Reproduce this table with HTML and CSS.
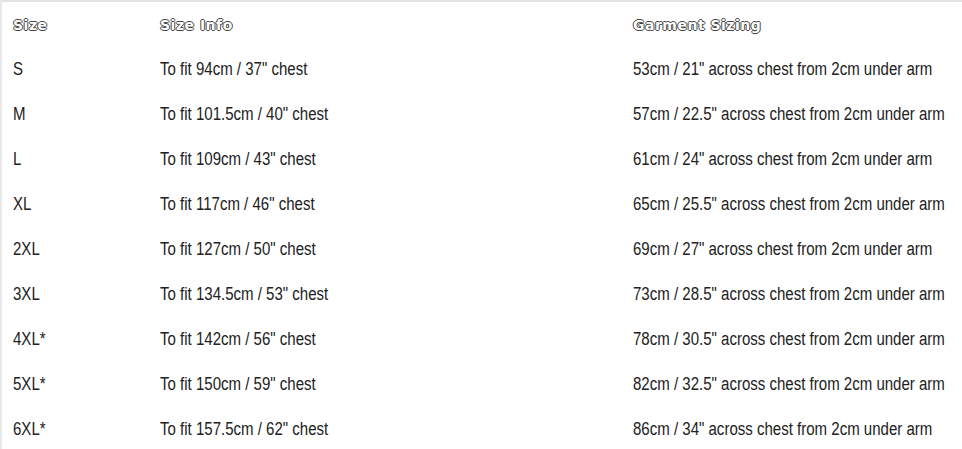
FILE: index.html
```html
<!DOCTYPE html>
<html>
<head>
<meta charset="utf-8">
<link rel="stylesheet" href="styles.css">
</head>
<body>
<div class="chart">
  <div class="row head">
    <div class="c1">Size</div><div class="c2">Size Info</div><div class="c3">Garment Sizing</div>
  </div>
  <div class="row"><div><span>S</span></div><div><span>To fit 94cm / 37" chest</span></div><div><span>53cm / 21" across chest from 2cm under arm</span></div></div>
  <div class="row"><div><span>M</span></div><div><span>To fit 101.5cm / 40" chest</span></div><div><span>57cm / 22.5" across chest from 2cm under arm</span></div></div>
  <div class="row"><div><span>L</span></div><div><span>To fit 109cm / 43" chest</span></div><div><span>61cm / 24" across chest from 2cm under arm</span></div></div>
  <div class="row"><div><span>XL</span></div><div><span>To fit 117cm / 46" chest</span></div><div><span>65cm / 25.5" across chest from 2cm under arm</span></div></div>
  <div class="row"><div><span>2XL</span></div><div><span>To fit 127cm / 50" chest</span></div><div><span>69cm / 27" across chest from 2cm under arm</span></div></div>
  <div class="row"><div><span>3XL</span></div><div><span>To fit 134.5cm / 53" chest</span></div><div><span>73cm / 28.5" across chest from 2cm under arm</span></div></div>
  <div class="row"><div><span>4XL*</span></div><div><span>To fit 142cm / 56" chest</span></div><div><span>78cm / 30.5" across chest from 2cm under arm</span></div></div>
  <div class="row"><div><span>5XL*</span></div><div><span>To fit 150cm / 59" chest</span></div><div><span>82cm / 32.5" across chest from 2cm under arm</span></div></div>
  <div class="row"><div><span>6XL*</span></div><div><span>To fit 157.5cm / 62" chest</span></div><div><span>86cm / 34" across chest from 2cm under arm</span></div></div>
</div>
</body>
</html>
```
FILE: styles.css
```css
html, body { margin: 0; padding: 0; background: #fff; }
.chart {
  border-top: 2px solid #e2e2e2;
  border-left: 2px solid #e8e8e8;
  height: 447px;
  overflow: hidden;
}
.row {
  display: grid;
  grid-template-columns: 147px 473px 1fr;
  height: 45px;
  align-items: center;
  padding-left: 11px;
  font-family: "Liberation Sans", Arial, sans-serif;
  font-size: 18px;
  color: #222;
  white-space: nowrap;
}
.row span {
  display: inline-block;
  transform: scaleX(0.835);
  transform-origin: left center;
}
.row.head {
  font-family: "DejaVu Sans", Verdana, sans-serif;
  font-size: 14px;
  font-weight: bold;
  letter-spacing: 0.5px;
  color: #fff;
  text-shadow: -1px 0 0 #444, 1px 0 0 #444, 0 -1px 0 #444, 0 1px 0 #444;
}
```
